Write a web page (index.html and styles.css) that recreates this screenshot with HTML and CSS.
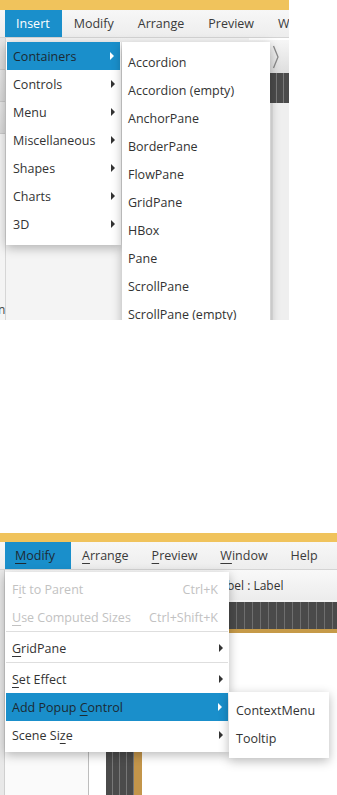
FILE: index.html
```html
<!DOCTYPE html>
<html>
<head>
<meta charset="utf-8">
<link rel="stylesheet" href="styles.css">
</head>
<body>
<div class="page">
  <div class="shot shot-top">
    <div class="titlebar"></div>
    <div class="menubar">
      <span class="mb-item active light">Insert</span>
      <span class="mb-item">Modify</span>
      <span class="mb-item">Arrange</span>
      <span class="mb-item">Preview</span>
      <span class="mb-item">W</span>
    </div>
    <div class="workspace top-ws">
      <div class="ws-left">
        <div class="lb"></div><div class="lb"></div><div class="lb"></div>
        <div class="lb-fill"></div>
        <div class="frag">n</div>
      </div>
      <div class="ws-mid"></div>
      <div class="ws-right">
        <div class="tabhead">
          <svg width="8" height="24" viewBox="0 0 8 24"><path d="M1.5 1 L6 12 L1.5 23" fill="none" stroke="#8a8a8a" stroke-width="1.3"/></svg>
        </div>
        <div class="stripes"></div>
        <div class="rail"></div>
      </div>
    </div>

    <div class="menu menu-insert">
      <div class="mi hl"><span>Containers</span><i class="arr"></i></div>
      <div class="mi"><span>Controls</span><i class="arr"></i></div>
      <div class="mi"><span>Menu</span><i class="arr"></i></div>
      <div class="mi"><span>Miscellaneous</span><i class="arr"></i></div>
      <div class="mi"><span>Shapes</span><i class="arr"></i></div>
      <div class="mi"><span>Charts</span><i class="arr"></i></div>
      <div class="mi"><span>3D</span><i class="arr"></i></div>
    </div>
    <div class="menu menu-containers">
      <div class="mi"><span>Accordion</span></div>
      <div class="mi"><span>Accordion (empty)</span></div>
      <div class="mi"><span>AnchorPane</span></div>
      <div class="mi"><span>BorderPane</span></div>
      <div class="mi"><span>FlowPane</span></div>
      <div class="mi"><span>GridPane</span></div>
      <div class="mi"><span>HBox</span></div>
      <div class="mi"><span>Pane</span></div>
      <div class="mi"><span>ScrollPane</span></div>
      <div class="mi"><span>ScrollPane (empty)</span></div>
    </div>
  </div>

  <div class="shot shot-bottom">
    <div class="titlebar t2"></div>
    <div class="menubar">
      <span class="mb-item active mod"><u>M</u>odify</span>
      <span class="mb-item"><u>A</u>rrange</span>
      <span class="mb-item"><u>P</u>review</span>
      <span class="mb-item"><u>W</u>indow</span>
      <span class="mb-item">Help</span>
    </div>
    <div class="workspace bot-ws">
      <div class="ws-left2"></div>
      <div class="ws-main">
        <div class="toolbar"><div class="crumb-clip"><span class="crumb">Label : Label</span></div></div>
        <div class="band"></div>
        <div class="canvas">
          <div class="cv-left"></div>
          <div class="cv-col"></div>
        </div>
      </div>
    </div>

    <div class="menu menu-modify">
      <div class="mi dis"><span>F<u>i</u>t to Parent</span><span class="sc">Ctrl+K</span></div>
      <div class="mi dis"><span><u>U</u>se Computed Sizes</span><span class="sc">Ctrl+Shift+K</span></div>
      <div class="sep"></div>
      <div class="mi"><span><u>G</u>ridPane</span><i class="arr"></i></div>
      <div class="sep"></div>
      <div class="mi"><span><u>S</u>et Effect</span><i class="arr"></i></div>
      <div class="mi hl"><span>Add Popup <u>C</u>ontrol</span><i class="arr"></i></div>
      <div class="mi"><span>Scene Si<u>z</u>e</span><i class="arr"></i></div>
    </div>
    <div class="menu menu-popup">
      <div class="mi"><span>ContextMenu</span></div>
      <div class="mi"><span>Tooltip</span></div>
    </div>
  </div>
</div>
</body>
</html>
```

FILE: styles.css
```css
* { box-sizing: border-box; }
html, body { margin: 0; padding: 0; background: #ffffff; }
body {
  width: 337px;
  height: 795px;
  overflow: hidden;
  font-family: "Open Sans", "Noto Sans", "Liberation Sans", sans-serif;
  font-size: 12px;
  color: #333333;
}
.page { display: flex; flex-direction: column; }

.shot { position: relative; overflow: hidden; background: #f3f3f3; display: flex; flex-direction: column; }
.shot-top { width: 289px; height: 320px; }
.shot-bottom { width: 337px; height: 262px; margin-top: 213px; }

.titlebar { height: 10px; background: #f0c35c; flex: none; }
.titlebar.t2 { height: 9px; }

.menubar {
  height: 28px;
  flex: none;
  display: flex;
  align-items: stretch;
  padding-left: 5px;
  background: linear-gradient(#f7f7f7, #ededed);
  border-bottom: 1px solid #d4d4d4;
}
.mb-item {
  display: flex;
  align-items: center;
  padding: 0 12px 1px 11px;
  margin-right: 1px;
  color: #3a3a3a;
  font-size: 12.5px;
  white-space: nowrap;
}
.mb-item.active { background: #1a8fcb; }
.mb-item.light { color: #ffffff; }
.mb-item.mod { color: #1e2a33; padding: 0 16px 1px 10px; }
.shot-bottom .mb-item { margin-right: 0; }
u { text-decoration: underline; text-underline-offset: 3px; text-decoration-thickness: 1px; }

.workspace { flex: 1; display: flex; min-height: 0; }

/* top workspace */
.ws-left { width: 6px; display: flex; flex-direction: column; background: #ececec; border-right: 1px solid #d6d6d6; position: relative; }
.lb { height: 32px; border-bottom: 1px solid #c9c9c9; background: linear-gradient(#e6e6e6, #d9d9d9); }
.lb-fill { flex: 1; background: #f4f4f4; }
.frag { position: absolute; left: -2px; bottom: 2px; font-size: 12px; color: #444; }
.ws-mid { flex: 1; background: #f4f4f4; }
.ws-right { width: 40px; display: flex; flex-direction: column; border-top: 2px solid #ffffff; }
.tabhead {
  height: 33px;
  background: linear-gradient(#f6f6f6, #dedede);
  display: flex;
  align-items: center;
  justify-content: flex-end;
  padding-right: 9px;
}
.stripes {
  height: 30px;
  background:
    repeating-linear-gradient(90deg, #4b4b4b 0 6px, #7a7a7a 6px 7px);
}
.rail { flex: 1; background: linear-gradient(90deg, #f4f4f4 0 22px, #e3e3e3 22px 24px, #efefef 24px); }

/* bottom workspace */
.ws-left2 { width: 5px; background: #e8e8e8; border-right: 1px solid #cfcfcf; }
.ws-main { flex: 1; display: flex; flex-direction: column; background: #ffffff; }
.toolbar {
  height: 32px;
  background: linear-gradient(#f9f9f9, #ececec);
  display: flex;
  align-items: center;
  padding-left: 224px;
  border-bottom: 2px solid #f4f4f4;
}
.crumb-clip { overflow: hidden; white-space: nowrap; }
.crumb { display: inline-block; margin-left: -15px; font-size: 12px; color: #333; }
.band {
  height: 31px;
  background: repeating-linear-gradient(90deg, #4a4a4a 0 7px, #6e6e6e 7px 8px);
  border-bottom: 4px solid #c69a48;
}
.canvas { flex: 1; display: flex; background: #ffffff; }
.cv-left { width: 84px; border-right: 1px solid #bdbdbd; background: #fafafa; }
.cv-col {
  margin-left: 17px;
  width: 36px;
  background:
    linear-gradient(90deg, transparent 0 28px, #c3954a 28px 36px),
    repeating-linear-gradient(90deg, #4b4b4b 0 6px, #777 6px 7px);
}

/* menus */
.menu {
  position: absolute;
  background: #ffffff;
  box-shadow: 0 3px 10px rgba(0,0,0,0.28);
  display: flex;
  flex-direction: column;
}
.mi {
  height: 28px;
  display: flex;
  align-items: center;
  justify-content: space-between;
  padding: 0 8px 0 7px;
  white-space: nowrap;
  color: #333333;
  font-size: 12.5px;
}
.mi.hl { background: #1a8fcb; color: #1c2a33; }
.arr {
  width: 0; height: 0;
  border-top: 4px solid transparent;
  border-bottom: 4px solid transparent;
  border-left: 4px solid #333;
}
.mi.hl .arr { border-left-color: #ffffff; }
.mi.dis { color: #c2c2c2; }
.sc { color: #c2c2c2; margin-left: 16px; margin-right: 5px; }
.sep { height: 3px; border-top: 1px solid #dedede; margin: 0 1px; flex: none; }

.menu-insert { left: 6px; top: 42px; width: 115px; padding-bottom: 7px; }
.menu-insert .mi { padding-left: 7px; padding-right: 6px; }
.menu-insert .mi.hl { margin: 0 1px; padding-left: 6px; }
.menu-containers { left: 122px; top: 42px; width: 148px; padding-top: 6px; }
.menu-containers .mi { padding-left: 6px; }

.menu-modify { left: 5px; top: 39px; width: 224px; padding-top: 3px; padding-bottom: 3px; }
.menu-modify .mi { padding-left: 7px; padding-right: 6px; }
.menu-modify .mi.hl { margin: 0 1px; padding-left: 6px; }
.menu-popup { left: 229px; top: 159px; width: 100px; padding-top: 4px; padding-bottom: 6px; }
.menu-popup .mi { padding-left: 7px; }
```
